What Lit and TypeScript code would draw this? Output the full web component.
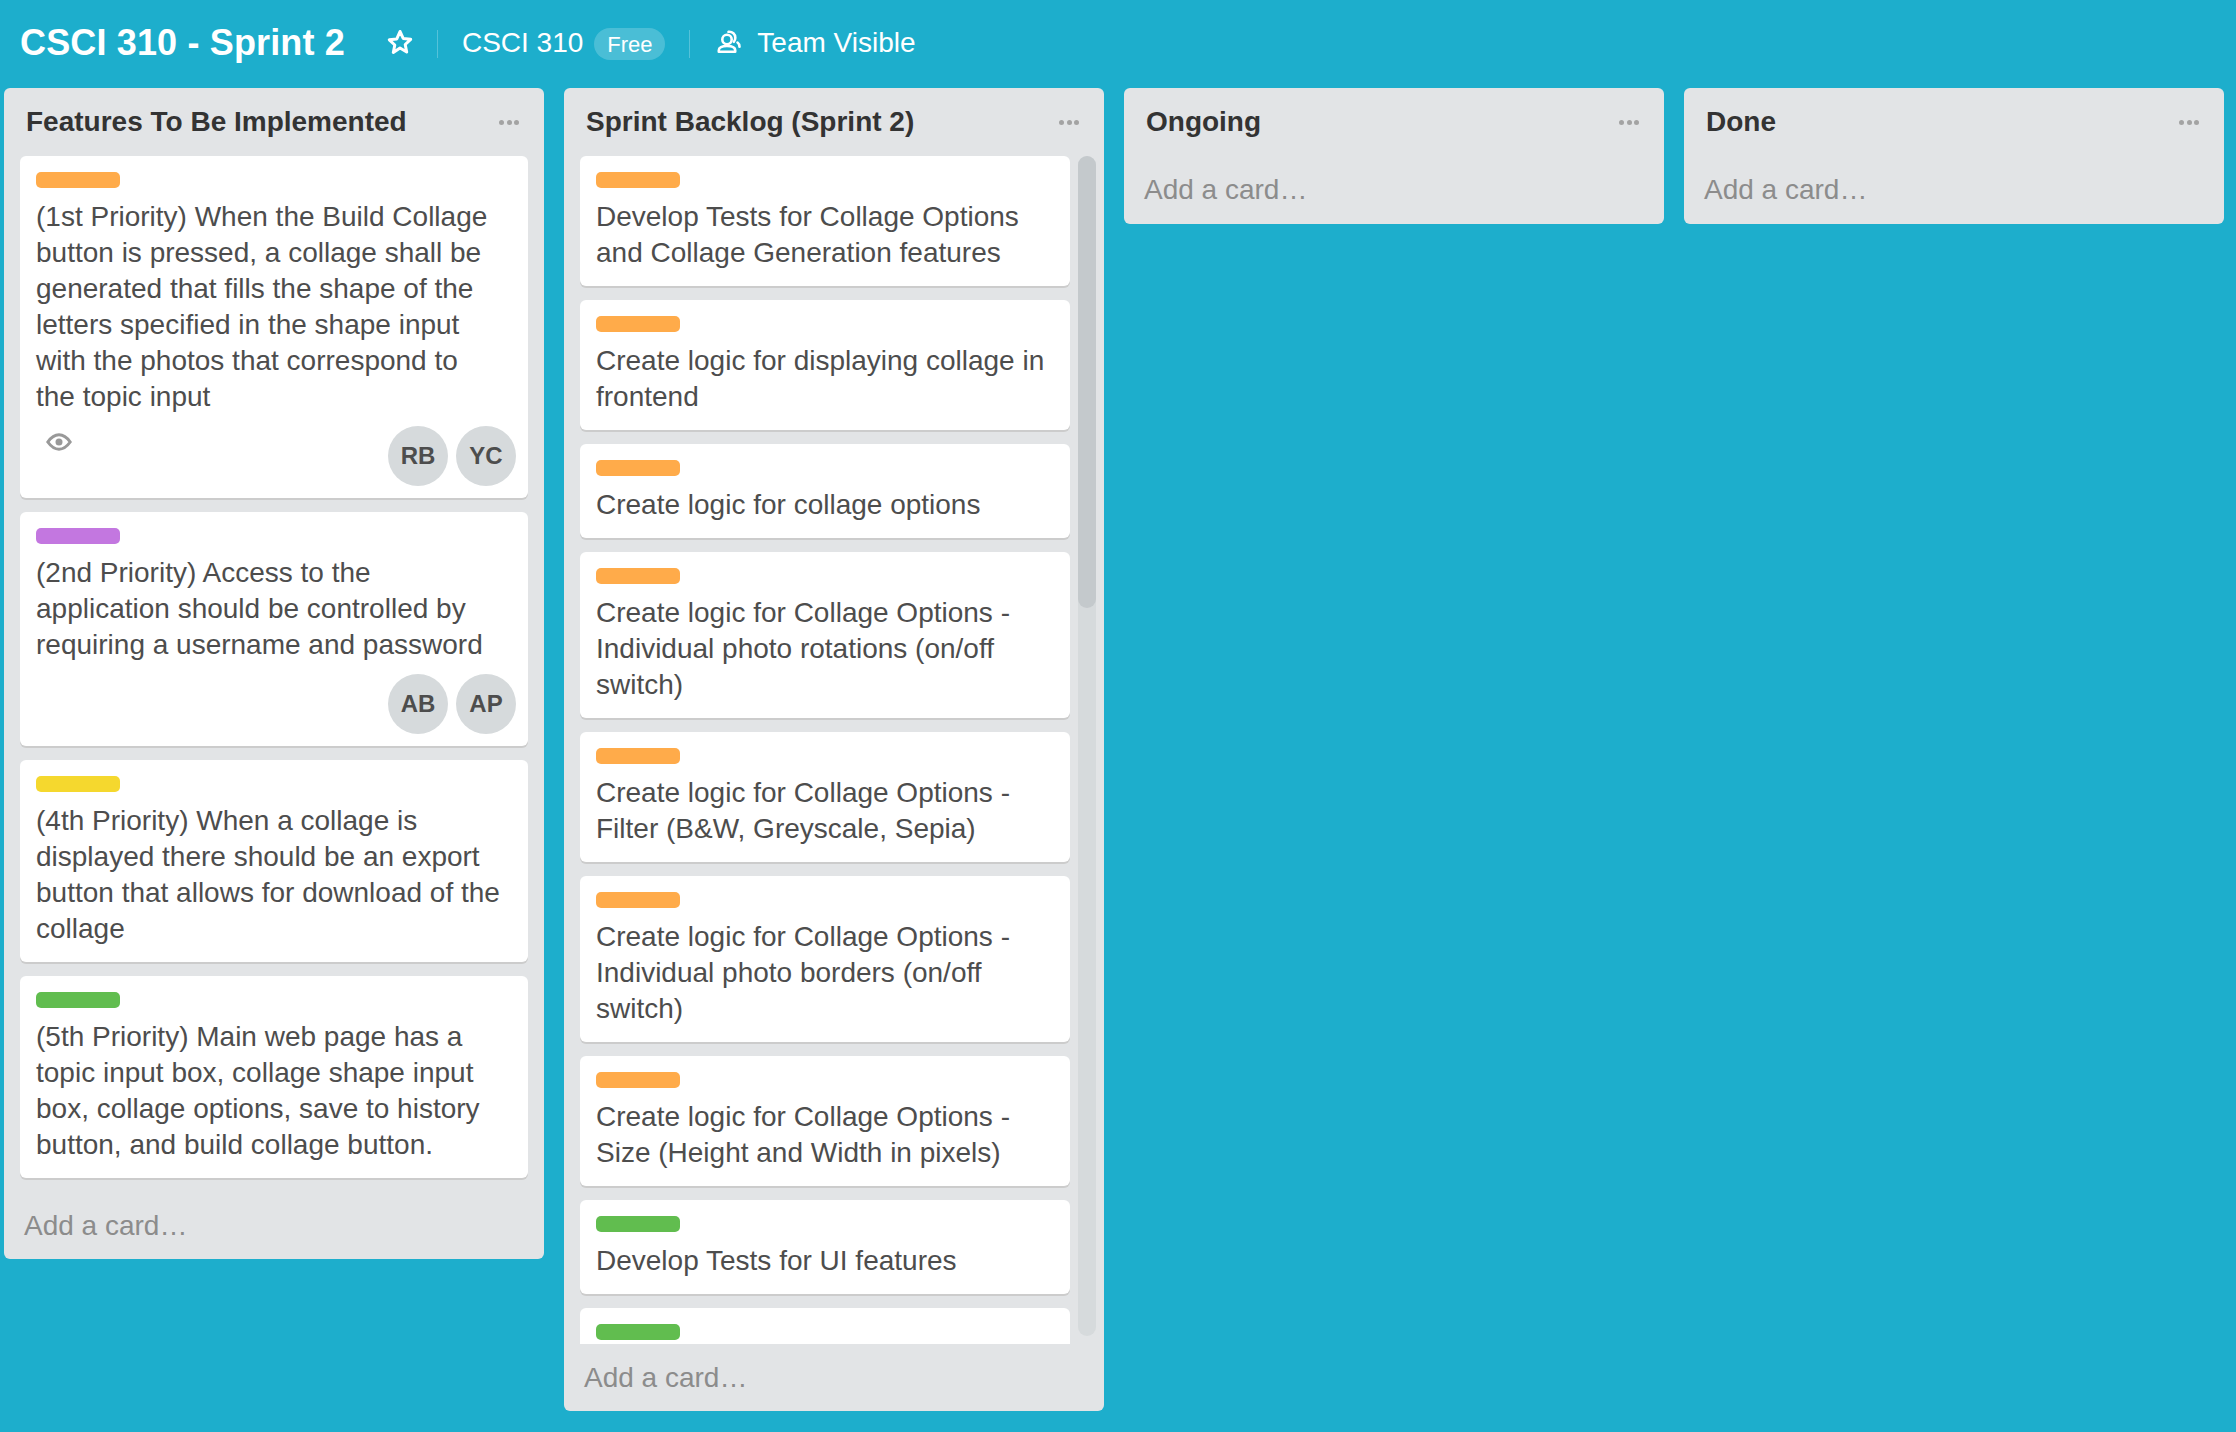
import { LitElement, css, html, nothing } from 'lit';
import { customElement } from 'lit/decorators.js';

type Card = { label: string; text: string; members?: string[]; watched?: boolean };
type List = { title: string; cards: Card[]; scroll?: boolean };

const ORANGE = 'orange';
const GREEN = 'green';

// line breaks are kept in the data, Liberation Sans wraps a little differently
const LISTS: List[] = [
  {
    title: 'Features To Be Implemented',
    cards: [
      {
        label: ORANGE,
        text: '(1st Priority) When the Build Collage\nbutton is pressed, a collage shall be\ngenerated that fills the shape of the\nletters specified in the shape input\nwith the photos that correspond to\nthe topic input',
        members: ['RB', 'YC'],
        watched: true,
      },
      {
        label: 'purple',
        text: '(2nd Priority) Access to the\napplication should be controlled by\nrequiring a username and password',
        members: ['AB', 'AP'],
      },
      {
        label: 'yellow',
        text: '(4th Priority) When a collage is\ndisplayed there should be an export\nbutton that allows for download of the\ncollage',
      },
      {
        label: GREEN,
        text: '(5th Priority) Main web page has a\ntopic input box, collage shape input\nbox, collage options, save to history\nbutton, and build collage button.',
      },
    ],
  },
  {
    title: 'Sprint Backlog (Sprint 2)',
    scroll: true,
    cards: [
      { label: ORANGE, text: 'Develop Tests for Collage Options\nand Collage Generation features' },
      { label: ORANGE, text: 'Create logic for displaying collage in\nfrontend' },
      { label: ORANGE, text: 'Create logic for collage options' },
      { label: ORANGE, text: 'Create logic for Collage Options -\nIndividual photo rotations (on/off\nswitch)' },
      { label: ORANGE, text: 'Create logic for Collage Options -\nFilter (B&W, Greyscale, Sepia)' },
      { label: ORANGE, text: 'Create logic for Collage Options -\nIndividual photo borders (on/off\nswitch)' },
      { label: ORANGE, text: 'Create logic for Collage Options -\nSize (Height and Width in pixels)' },
      { label: GREEN, text: 'Develop Tests for UI features' },
      { label: GREEN, text: '' },
    ],
  },
  { title: 'Ongoing', cards: [] },
  { title: 'Done', cards: [] },
];

@customElement('app-root')
export class AppRoot extends LitElement {
  static styles = css`
    :host {
      display: block;
      height: 1432px;
      background: #1daecc;
      font-family: 'Liberation Sans', Arial, sans-serif;
      overflow: hidden;
    }
    .header {
      display: flex;
      align-items: center;
      height: 88px;
      padding-left: 20px;
      color: #fff;
      font-size: 28px;
    }
    .board-name {
      font-size: 36px;
      font-weight: 700;
      letter-spacing: 0.15px;
      margin: 0 42px 2px 0;
    }
    .star { width: 26px; height: 26px; margin: 0 24px 4px 0; }
    .sep {
      width: 1px;
      height: 28px;
      background: rgba(255, 255, 255, 0.25);
    }
    .org { margin: 0 0 2px 24px; }
    .pill {
      margin-left: 11px;
      height: 32px;
      width: 71px;
      border-radius: 16px;
      background: rgba(255, 255, 255, 0.2);
      font-size: 22px;
      line-height: 34px;
      text-align: center;
      margin-right: 24px;
    }
    .team-icon { width: 24px; height: 24px; margin: 0 16px 5px 27px; }
    .team { margin-bottom: 2px; }
    .board {
      display: flex;
      align-items: flex-start;
      gap: 20px;
      padding: 0 12px 0 4px;
    }
    .list {
      flex: none;
      width: 540px;
      box-sizing: border-box;
      background: #e2e4e6;
      border-radius: 6px;
    }
    .list-head {
      display: flex;
      align-items: center;
      justify-content: space-between;
      height: 68px;
      padding: 0 25px 0 22px;
      color: #333;
      font-size: 28px;
      font-weight: 700;
    }
    .dots { display: flex; gap: 2.5px; }
    .dots i {
      display: block;
      width: 5px;
      height: 5px;
      border-radius: 50%;
      background: #a3a3a3;
    }
    .body { display: flex; gap: 8px; padding: 0 8px 0 16px; }
    .list:not(.scroll) .body { padding-right: 16px; }
    .cards {
      flex: 1;
      min-width: 0;
      display: flex;
      flex-direction: column;
      gap: 14px;
    }
    .scroll .cards { height: 1188px; overflow: hidden; }
    .card {
      flex: none;
      background: #fff;
      border-radius: 6px;
      box-shadow: 0 2px 0 #ccc;
      padding: 16px 8px 15px 16px;
      color: #4d4d4d;
      font-size: 28px;
      line-height: 36px;
    }
    .text { white-space: pre-line; }
    .label { width: 84px; height: 16px; border-radius: 5px; margin-bottom: 11px; }
    .orange { background: #ffab4a; }
    .purple { background: #c377e0; }
    .yellow { background: #f5d82e; }
    .green { background: #61bd4f; }
    .meta {
      display: flex;
      justify-content: space-between;
      align-items: flex-start;
      margin: 11px 4px -3px 0;
    }
    .eye { width: 26px; height: 18px; margin: 7px 0 0 10px; }
    .members { display: flex; gap: 8px; margin-left: auto; }
    .avatar {
      width: 60px;
      height: 60px;
      border-radius: 50%;
      background: #d6dadc;
      color: #4d4d4d;
      font-size: 24px;
      font-weight: 700;
      line-height: 60px;
      text-align: center;
    }
    .track {
      flex: none;
      width: 18px;
      height: 1180px;
      border-radius: 9px;
      background: #d6dadc;
    }
    .thumb { height: 452px; border-radius: 9px; background: #c4c9cc; }
    .add {
      height: 68px;
      line-height: 68px;
      padding-left: 20px;
      color: #8c8c8c;
      font-size: 28px;
    }
    .has-cards .add { margin-top: 14px; height: 67px; line-height: 67px; }
    .scroll .add { margin-top: 0; }
  `;

  private renderCard(card: Card) {
    return html`
      <div class="card">
        <div class="label ${card.label}"></div>
        ${card.text ? html`<div class="text">${card.text}</div>` : nothing}
        ${card.members
          ? html`<div class="meta">
              ${card.watched
                ? html`<svg class="eye" viewBox="0 0 26 18" fill="none" stroke="#999" stroke-width="3">
                    <path d="M1.800 9C5.500 3.800 9.200 1.800 13 1.800S20.500 3.800 24.200 9C20.500 14.200 16.800 16.200 13 16.200S5.500 14.200 1.800 9Z" />
                    <circle cx="13" cy="9" r="3.500" fill="#999" stroke="none" />
                  </svg>`
                : nothing}
              <div class="members">
                ${card.members.map((m) => html`<div class="avatar">${m}</div>`)}
              </div>
            </div>`
          : nothing}
      </div>
    `;
  }

  private renderList(list: List) {
    return html`
      <section class="list ${list.scroll ? 'scroll' : ''} ${list.cards.length ? 'has-cards' : ''}">
        <div class="list-head">
          <span>${list.title}</span>
          <span class="dots"><i></i><i></i><i></i></span>
        </div>
        ${list.cards.length
          ? html`<div class="body">
              <div class="cards">${list.cards.map((c) => this.renderCard(c))}</div>
              ${list.scroll ? html`<div class="track"><div class="thumb"></div></div>` : nothing}
            </div>`
          : nothing}
        <div class="add">Add a card…</div>
      </section>
    `;
  }

  render() {
    return html`
      <header class="header">
        <span class="board-name">CSCI 310 - Sprint 2</span>
        <svg class="star" viewBox="0 0 26 26" fill="none" stroke="#fff" stroke-width="3" stroke-linejoin="round">
          <path d="M13 2.500l3.200 6.900 7.500.9-5.500 5.200 1.500 7.500L13 19l-6.700 4.500 1.500-7.500-5.500-5.200 7.500-.9z" />
        </svg>
        <span class="sep"></span>
        <span class="org">CSCI 310</span>
        <span class="pill">Free</span>
        <span class="sep"></span>
        <svg class="team-icon" viewBox="0 0 24 24" fill="none" stroke="#fff" stroke-width="2.600" stroke-linejoin="round" stroke-linecap="round">
          <circle cx="10" cy="9.500" r="4.700" />
          <path d="M1.800 21.800v-1.600c0-2.700 3-4.200 8.200-4.200s8.200 1.500 8.200 4.200v1.600z" />
          <path d="M11.500 1.800c4 -.3 6.800 2.400 6.800 6 0 1.600-.5 2.900-1.400 4M20.500 12.500c1.400 1 2 2.300 2 4.200" />
        </svg>
        <span class="team">Team Visible</span>
      </header>
      <main class="board">${LISTS.map((l) => this.renderList(l))}</main>
    `;
  }
}
